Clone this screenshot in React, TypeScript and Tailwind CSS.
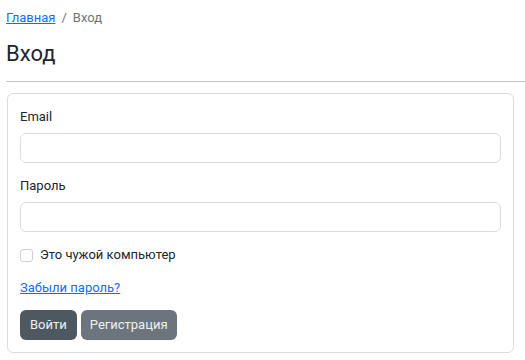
import { useState } from "react";

export default function App() {
	const [email, setEmail] = useState("");
	const [password, setPassword] = useState("");
	const [foreign, setForeign] = useState(false);

	return (
		<div className="min-h-screen bg-white px-[6px] pt-[8px] text-[13px] text-[#212529] [font-family:Roboto,'Noto_Sans',sans-serif]">
			<nav className="flex items-center gap-[6px] text-[13px] leading-[20px] text-[#6c757d]">
				<a href="#" className="text-[#0d6efd] underline">
					Главная
				</a>
				<span>/</span>
				<span>Вход</span>
			</nav>

			<h1 className="mt-[11px] text-[22px] leading-[30px] font-normal text-[#212529]">Вход</h1>

			<hr className="mt-[12px] -mr-[6px] border-t border-[#c8c8c8]" />

			<form
				className="mt-[11px] mr-[5px] ml-px flex flex-col rounded-[6px] border border-[#dcdcdc] px-[12px] pt-[13px] pb-[12px]"
				onSubmit={(e) => e.preventDefault()}
			>
				<label className="leading-[20px]" htmlFor="email">
					Email
				</label>
				<input
					id="email"
					type="email"
					value={email}
					onChange={(e) => setEmail(e.target.value)}
					className="mt-[6px] h-[30px] rounded-[6px] border border-[#dcdcdc] px-3 outline-none"
				/>

				<label className="mt-[13px] leading-[20px]" htmlFor="password">
					Пароль
				</label>
				<input
					id="password"
					type="password"
					value={password}
					onChange={(e) => setPassword(e.target.value)}
					className="mt-[6px] h-[30px] rounded-[6px] border border-[#dcdcdc] px-3 outline-none"
				/>

				<label className="mt-[13px] flex items-center gap-[7px] leading-[20px]">
					<input
						type="checkbox"
						checked={foreign}
						onChange={(e) => setForeign(e.target.checked)}
						className="size-[13px] appearance-none rounded-[3px] border border-[#d0d0d0] bg-white"
					/>
					Это чужой компьютер
				</label>

				<a href="#" className="mt-[13px] self-start leading-[20px] text-[#0d6efd] underline">
					Забыли пароль?
				</a>

				<div className="mt-[12px] flex gap-[4px]">
					<button type="submit" className="h-[30px] rounded-[6px] bg-[#4d5861] px-[10px] text-[13px] text-[#eef0f2]">
						Войти
					</button>
					<button type="button" className="h-[30px] rounded-[6px] bg-[#6c757d] px-[9px] text-[13px] text-[#eef0f2]">
						Регистрация
					</button>
				</div>
			</form>
		</div>
	);
}
